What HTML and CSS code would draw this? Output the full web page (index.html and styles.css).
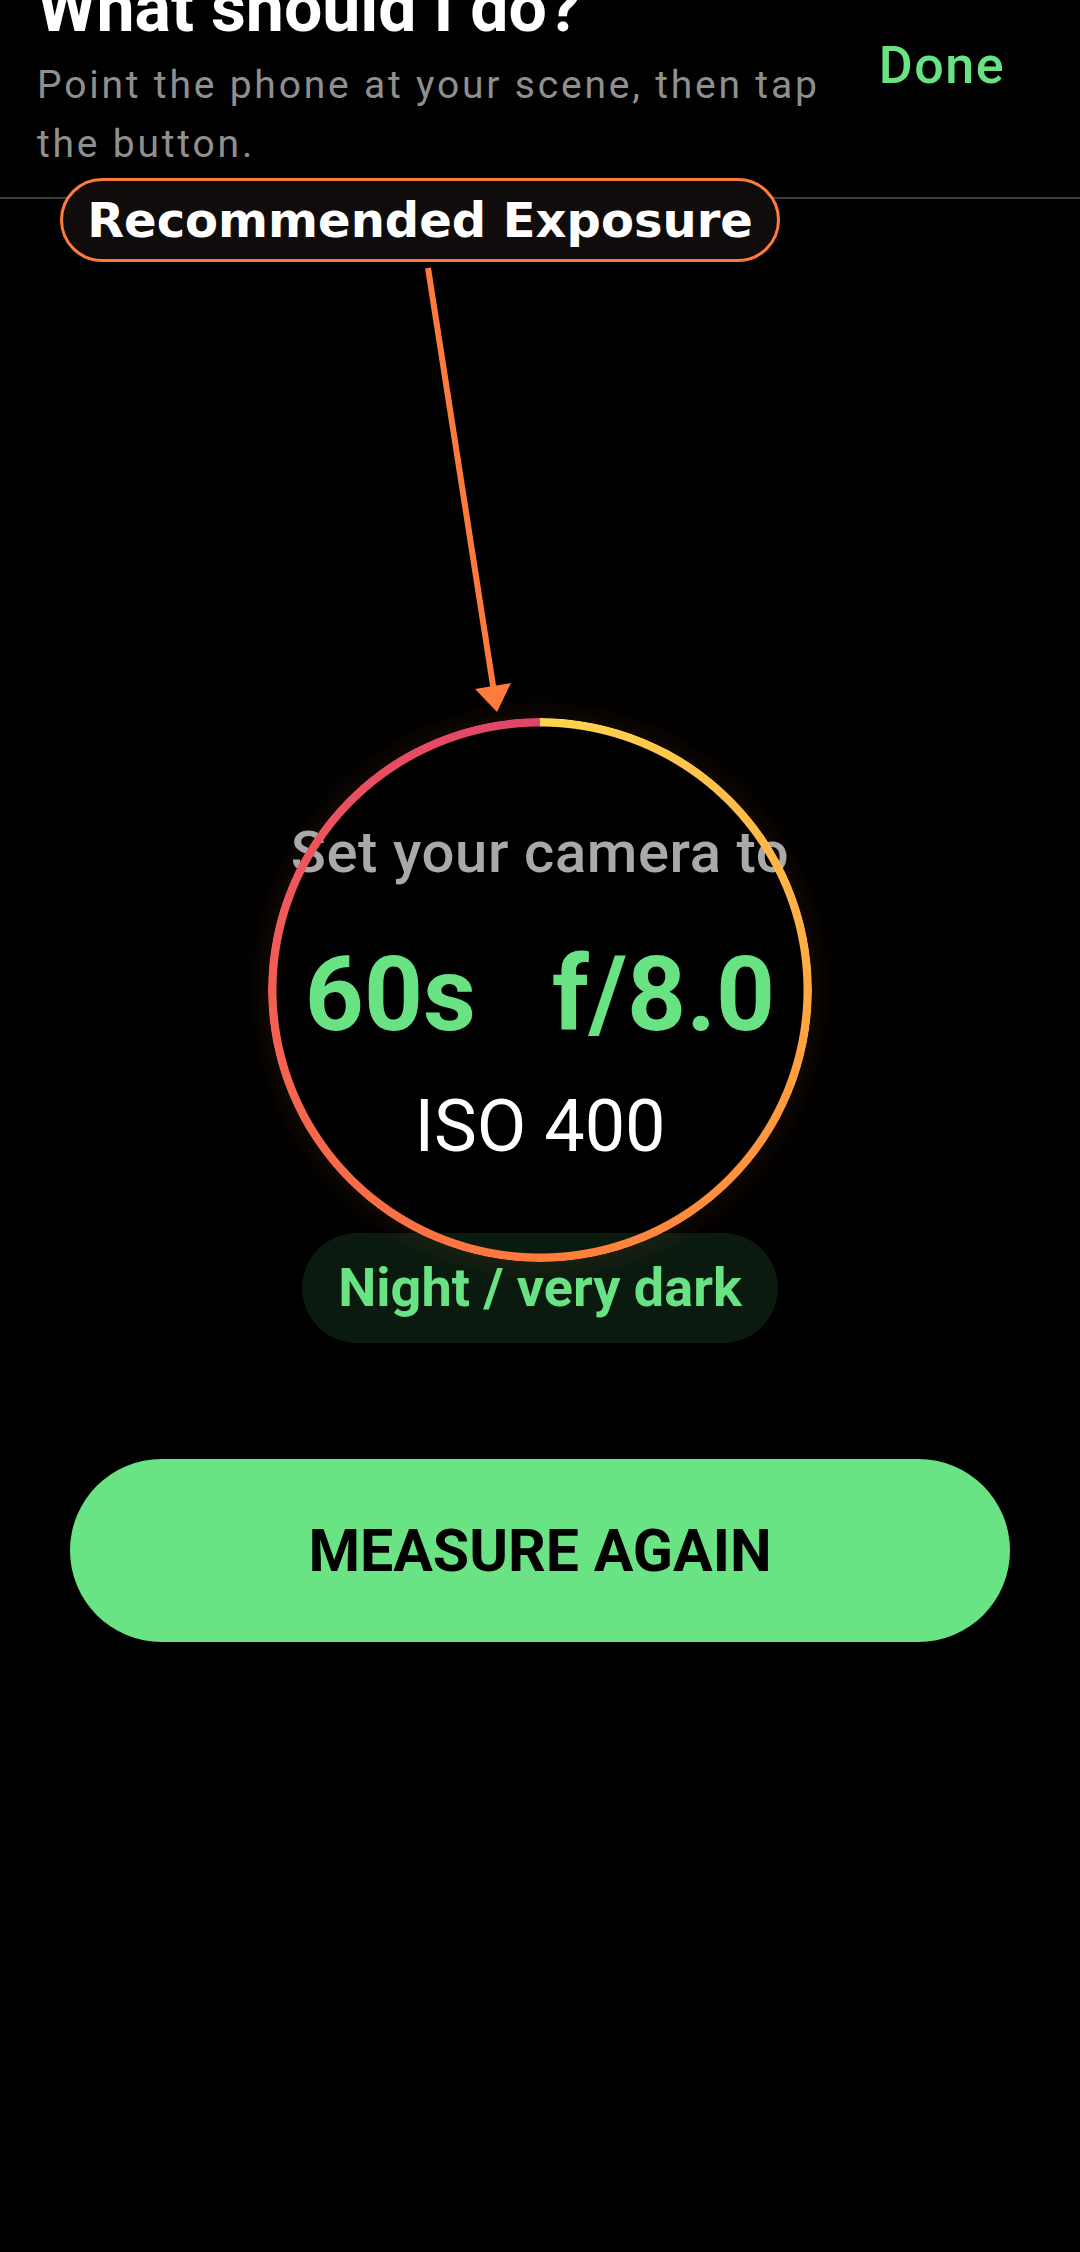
FILE: index.html
```html
<!DOCTYPE html>
<html lang="en">
<head>
    <meta charset="UTF-8">
    <meta name="viewport" content="width=device-width, initial-scale=1.0">
    <title>Light meter</title>
    <link rel="stylesheet" href="styles.css">
</head>
<body>
    <div class="screen">
        <header class="top-bar">
            <div class="top-text">
                <h1 class="title">What should I do?</h1>
                <p class="hint">Point the phone at your scene, then tap the button.</p>
            </div>
            <button class="done">Done</button>
        </header>

        <main class="meter">
            <div class="dial">
                <div class="dial-label">Set your camera to</div>
                <div class="dial-values">
                    <span>60s</span>
                    <span>f/8.0</span>
                </div>
                <div class="dial-iso">ISO 400</div>
            </div>
            <div class="scene-chip">Night / very dark</div>
            <button class="measure">MEASURE AGAIN</button>
        </main>

        <!-- tutorial overlay -->
        <div class="tip">Recommended Exposure</div>
        <svg class="tip-arrow" width="1080" height="720" viewBox="0 0 1080 720">
            <line x1="428" y1="268" x2="494" y2="692" stroke="#ff7b3b" stroke-width="6"/>
            <polygon points="475,689 511,683 497,712" fill="#ff7b3b"/>
        </svg>
    </div>
</body>
</html>
```

FILE: styles.css
```css
body {
    margin: 0;
    background-color: #000;
    font-family: Roboto, "Noto Sans", sans-serif;
}
.screen {
    position: relative;
    min-height: 2252px;
    overflow: hidden;
}
.top-bar {
    display: flex;
    gap: 28px;
    margin-top: -32px;
    padding: 0 75px 23px 37px;
    border-bottom: 2px solid #3d3d3d;
}
.top-text {
    flex: 1;
}
.title {
    margin: 0;
    color: #fff;
    font-size: 68px;
    font-weight: 700;
    line-height: 1.2;
    white-space: nowrap;
}
.hint {
    margin: 6px 0 0;
    color: #8f8f8f;
    font-size: 39px;
    line-height: 59px;
    letter-spacing: 2.8px;
}
.done {
    align-self: flex-start;
    margin-top: 68px;
    padding: 0;
    border: 0;
    background: none;
    color: #69e284;
    font-family: Roboto, sans-serif;
    font-size: 52px;
    font-weight: 500;
    line-height: 60px;
    letter-spacing: 1.5px;
}
.meter {
    display: flex;
    flex-direction: column;
    align-items: center;
    padding-top: 519px;
}
.dial {
    position: relative;
    width: 544px;
    height: 544px;
    box-sizing: border-box;
    padding-top: 101px;
    border-radius: 50%;
    display: flex;
    flex-direction: column;
    align-items: center;
    box-shadow: 0 0 28px 4px rgba(255, 130, 60, 0.10);
}
.dial::after {
    content: "";
    position: absolute;
    inset: 0;
    border-radius: 50%;
    background: conic-gradient(#ffd64f, #ffa843 25%, #ff7b3a 50%, #f35e55 75%, #e0446b);
    -webkit-mask: radial-gradient(farthest-side, transparent calc(100% - 9px), #000 calc(100% - 8px));
    mask: radial-gradient(farthest-side, transparent calc(100% - 9px), #000 calc(100% - 8px));
}
.dial-label {
    color: #a9a9a9;
    font-size: 58px;
    font-weight: 500;
    line-height: 67px;
    letter-spacing: 0.6px;
    white-space: nowrap;
}
.dial-values {
    display: flex;
    gap: 76px;
    margin-top: 48px;
    color: #69e284;
    font-size: 103px;
    font-weight: 700;
    line-height: 122px;
}
.dial-iso {
    margin-top: 29px;
    color: #fff;
    font-size: 72px;
    line-height: 84px;
}
.scene-chip {
    margin-top: -29px;
    height: 110px;
    padding: 0 36px;
    border-radius: 55px;
    background: #0a1a0f;
    color: #69e284;
    font-size: 54px;
    font-weight: 700;
    line-height: 110px;
}
.measure {
    margin-top: 116px;
    width: 940px;
    height: 183px;
    border: 0;
    border-radius: 92px;
    background: #6ae384;
    color: #000;
    font-family: Roboto, sans-serif;
    font-size: 59px;
    font-weight: 700;
}
.tip {
    position: absolute;
    left: 60px;
    top: 178px;
    width: 720px;
    height: 84px;
    box-sizing: border-box;
    border: 3px solid #ff7b3b;
    border-radius: 42px;
    background: #100c0b;
    color: #fff;
    font-family: "DejaVu Sans", sans-serif;
    font-size: 48px;
    font-weight: 700;
    display: flex;
    align-items: center;
    justify-content: center;
    white-space: nowrap;
}
.tip-arrow {
    position: absolute;
    left: 0;
    top: 0;
}
```
